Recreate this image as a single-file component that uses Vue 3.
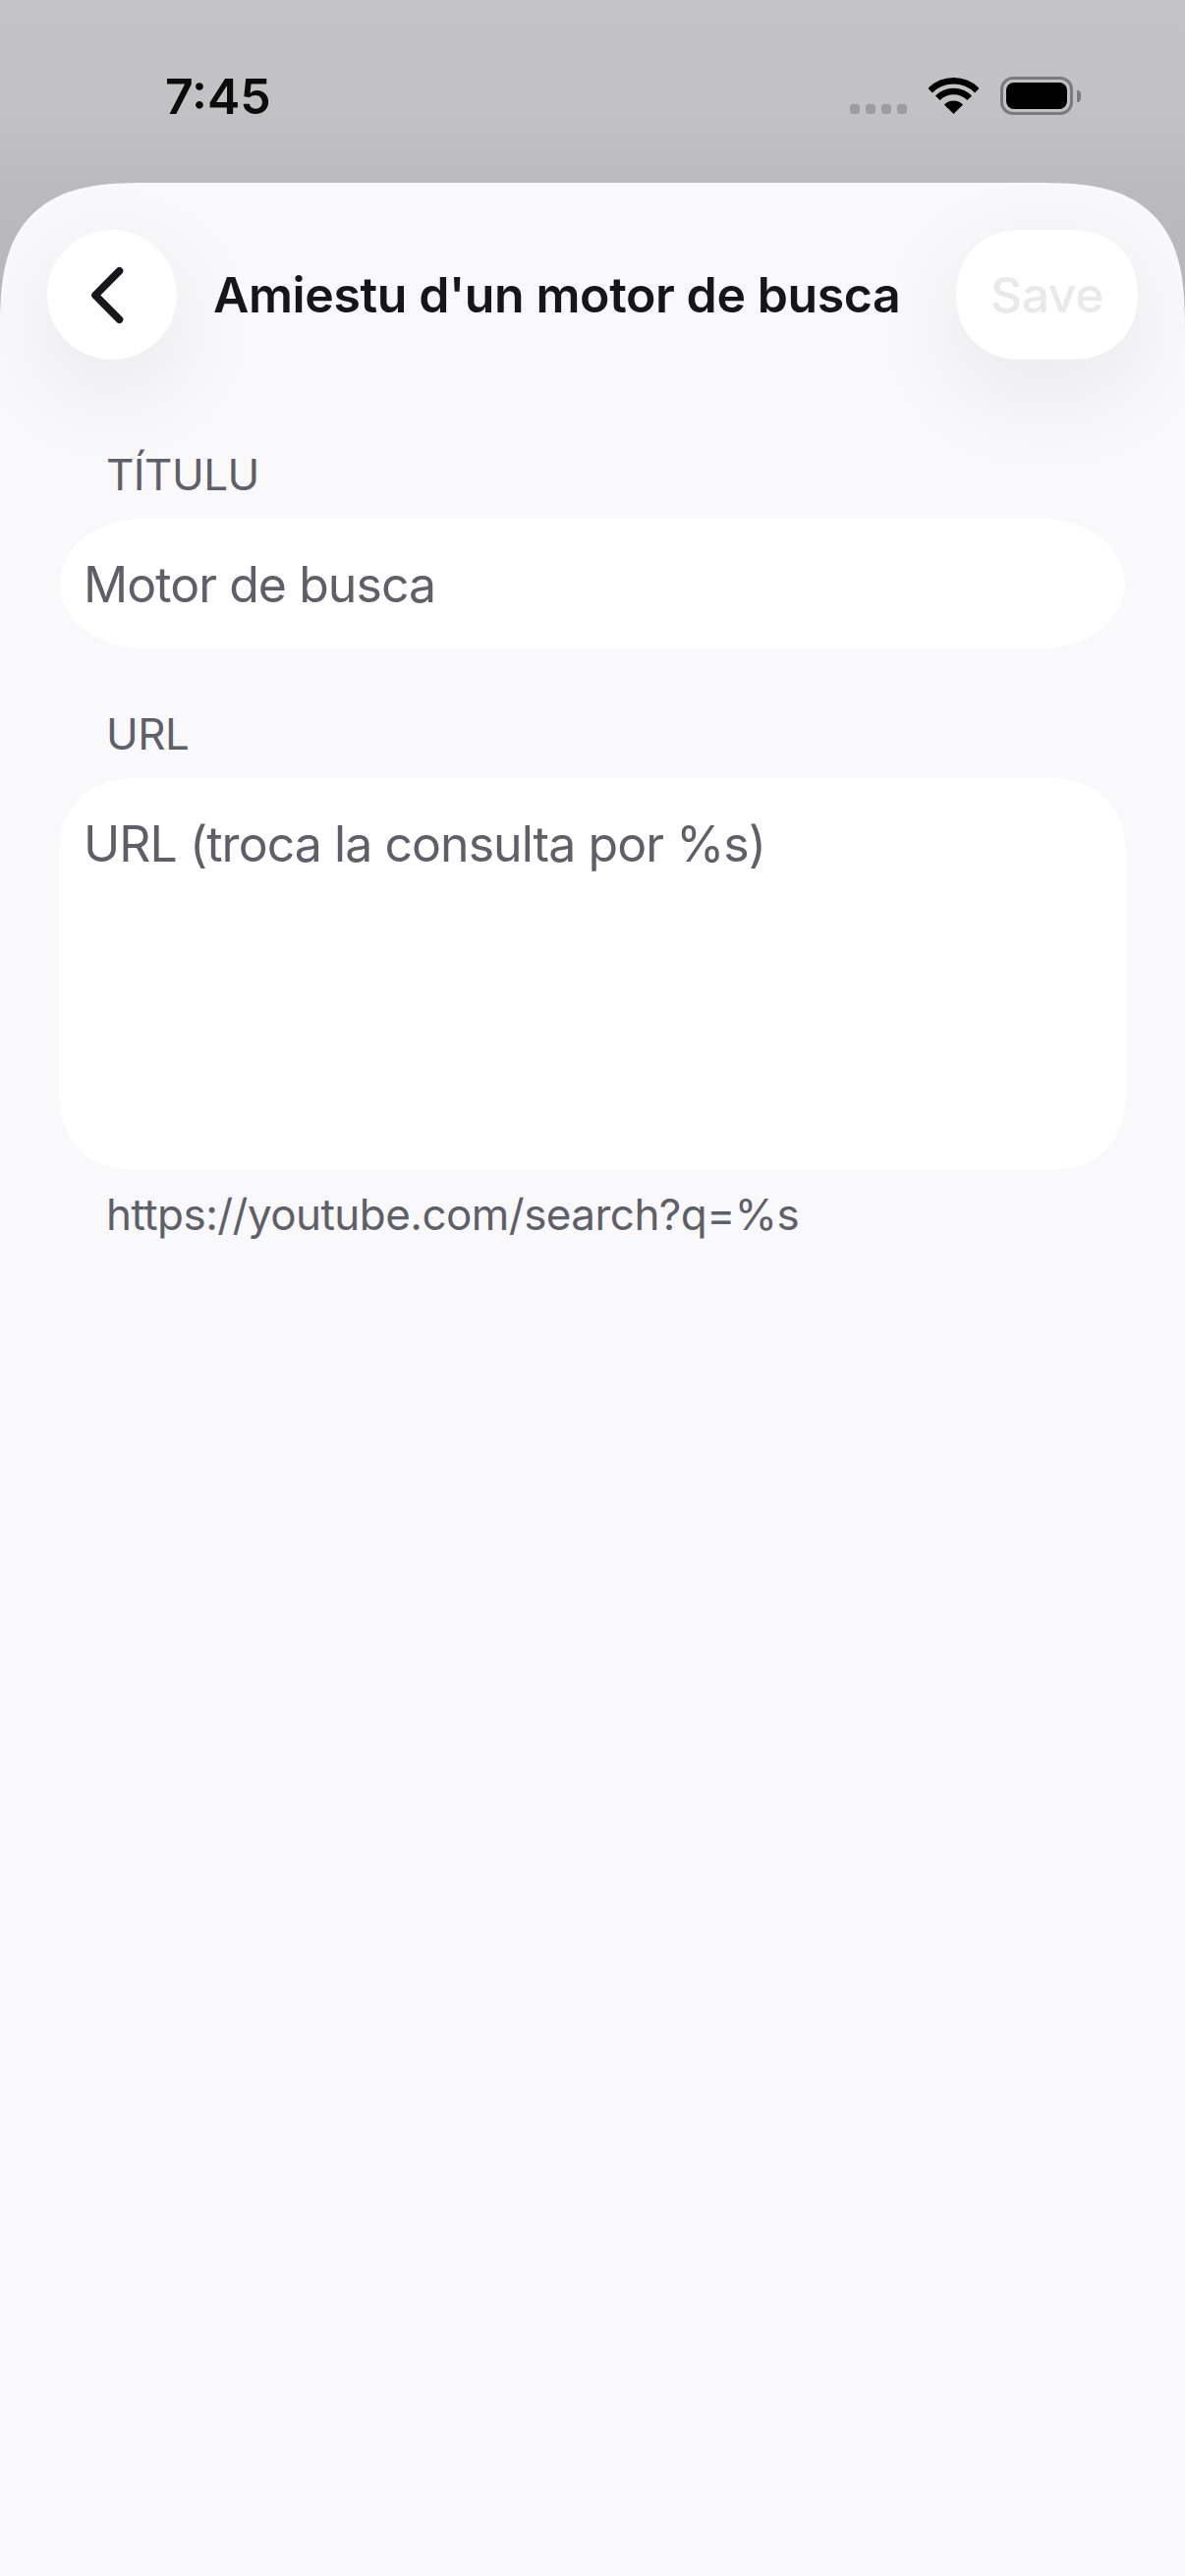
<script setup>
const title = "Amiestu d'un motor de busca"
const dots = [1, 2, 3, 4]
</script>

<template>
  <div class="screen">
    <div class="status">
      <span class="time">7:45</span>
      <div class="status-icons">
        <div class="signal">
          <i v-for="d in dots" :key="d"></i>
        </div>
        <svg class="wifi" width="51" height="37" viewBox="0 0 51 37" fill="none">
          <path d="M1.64 13.14A33.75 33.75 0 0 1 49.36 13.14" stroke="#000" stroke-width="6.5" />
          <path d="M9.24 20.74A23 23 0 0 1 41.76 20.74" stroke="#000" stroke-width="6.5" />
          <path d="M25.5 37L15.95 27.45A13.5 13.5 0 0 1 35.05 27.45Z" fill="#000" />
        </svg>
        <div class="battery"><div class="level"></div></div>
        <div class="nub"></div>
      </div>
    </div>

    <div class="sheet">
      <header class="head">
        <button class="back">
          <svg width="40" height="66" viewBox="0 0 40 66" fill="none">
            <path d="M31.5 8.8L7 33.5L31.5 58.2" stroke="#17171c" stroke-width="7.6" stroke-linecap="round" stroke-linejoin="round" />
          </svg>
        </button>
        <h1 class="title">{{ title }}</h1>
        <button class="save">Save</button>
      </header>

      <div class="form">
        <div class="label">TÍTULU</div>
        <div class="field single">Motor de busca</div>
        <div class="label url-label">URL</div>
        <div class="field multi">URL (troca la consulta por %s)</div>
        <div class="label hint">https://youtube.com/search?q=%s</div>
      </div>
    </div>
  </div>
</template>

<style scoped>
.screen {
  width: 1206px;
  height: 2622px;
  display: flex;
  flex-direction: column;
  overflow: hidden;
  background: linear-gradient(#c3c3c5 0, #c2c2c4 110px, #bbbbbd 186px, #b6b6b8 340px);
  font-family: Inter, "Liberation Sans", sans-serif;
}

.status {
  height: 186px;
  flex: none;
  display: flex;
  justify-content: space-between;
  padding: 0 106px 0 168px;
  box-sizing: border-box;
}
.time {
  font-size: 50px;
  font-weight: 600;
  line-height: 60px;
  margin-top: 68px;
  color: #0b0b0c;
}
.status-icons {
  display: flex;
  align-items: flex-start;
  padding-top: 78px;
}
.signal {
  display: flex;
  gap: 6px;
  margin-top: 28px;
  margin-right: 22px;
}
.signal i {
  width: 10px;
  height: 10px;
  border-radius: 3px;
  background: #9d9d9f;
}
.wifi {
  margin-top: 1px;
  margin-right: 22px;
}
.battery {
  width: 74px;
  height: 39px;
  box-sizing: border-box;
  border: 3px solid #7b7b7d;
  border-radius: 13px;
  padding: 3px;
}
.level {
  height: 100%;
  background: #000;
  border-radius: 8px;
}
.nub {
  width: 4px;
  height: 12px;
  margin: 14px 0 0 4px;
  background: #7b7b7d;
  border-radius: 0 4px 4px 0;
}

.sheet {
  flex: 1;
  background: #f9f9fb;
  border-radius: 110px 110px 0 0;
  overflow: hidden;
}
.head {
  display: flex;
  align-items: center;
  padding: 48px 48px 0;
}
.back,
.save {
  height: 132px;
  border: 0;
  background: #fff;
  box-shadow: 0 30px 100px rgba(20, 20, 30, 0.08);
  font-family: inherit;
  padding: 0;
}
.back {
  width: 132px;
  border-radius: 50%;
  display: flex;
  align-items: center;
  justify-content: center;
  padding-right: 8px;
  box-sizing: border-box;
}
.save {
  width: 185px;
  border-radius: 66px;
  margin-left: auto;
  font-size: 50px;
  font-weight: 500;
  letter-spacing: -0.5px;
  color: #e9e9ec;
}
.title {
  margin: 0 0 0 37px;
  font-size: 50px;
  line-height: 60px;
  font-weight: 600;
  letter-spacing: -0.4px;
  color: #15151a;
  white-space: nowrap;
}

.form {
  padding: 91px 61px 0;
}
.label {
  font-size: 44px;
  line-height: 52px;
  letter-spacing: -0.55px;
  color: #5f5f6a;
  padding-left: 47px;
  margin-bottom: 19px;
}
.url-label {
  margin-top: 61px;
}
.hint {
  margin-top: 19px;
  margin-bottom: 0;
}
.field {
  background: #fff;
  font-size: 50px;
  line-height: 60px;
  letter-spacing: -0.95px;
  color: #5f5f6a;
  padding-left: 24px;
  padding-top: 37px;
  box-sizing: border-box;
}
.single {
  height: 132px;
  border-radius: 84px / 66px;
}
.multi {
  height: 399px;
  margin: 0 -1px;
  padding-left: 25px;
  border-radius: 84px;
}

@supports (corner-shape: squircle) {
  .sheet {
    border-radius: 150px 150px 0 0;
    corner-shape: superellipse(1.5);
  }
  .save {
    corner-shape: superellipse(1.1);
  }
  .multi {
    corner-shape: superellipse(1.3);
  }
}
</style>

<style>
html,
body {
  background: #f9f9fb;
}
</style>
